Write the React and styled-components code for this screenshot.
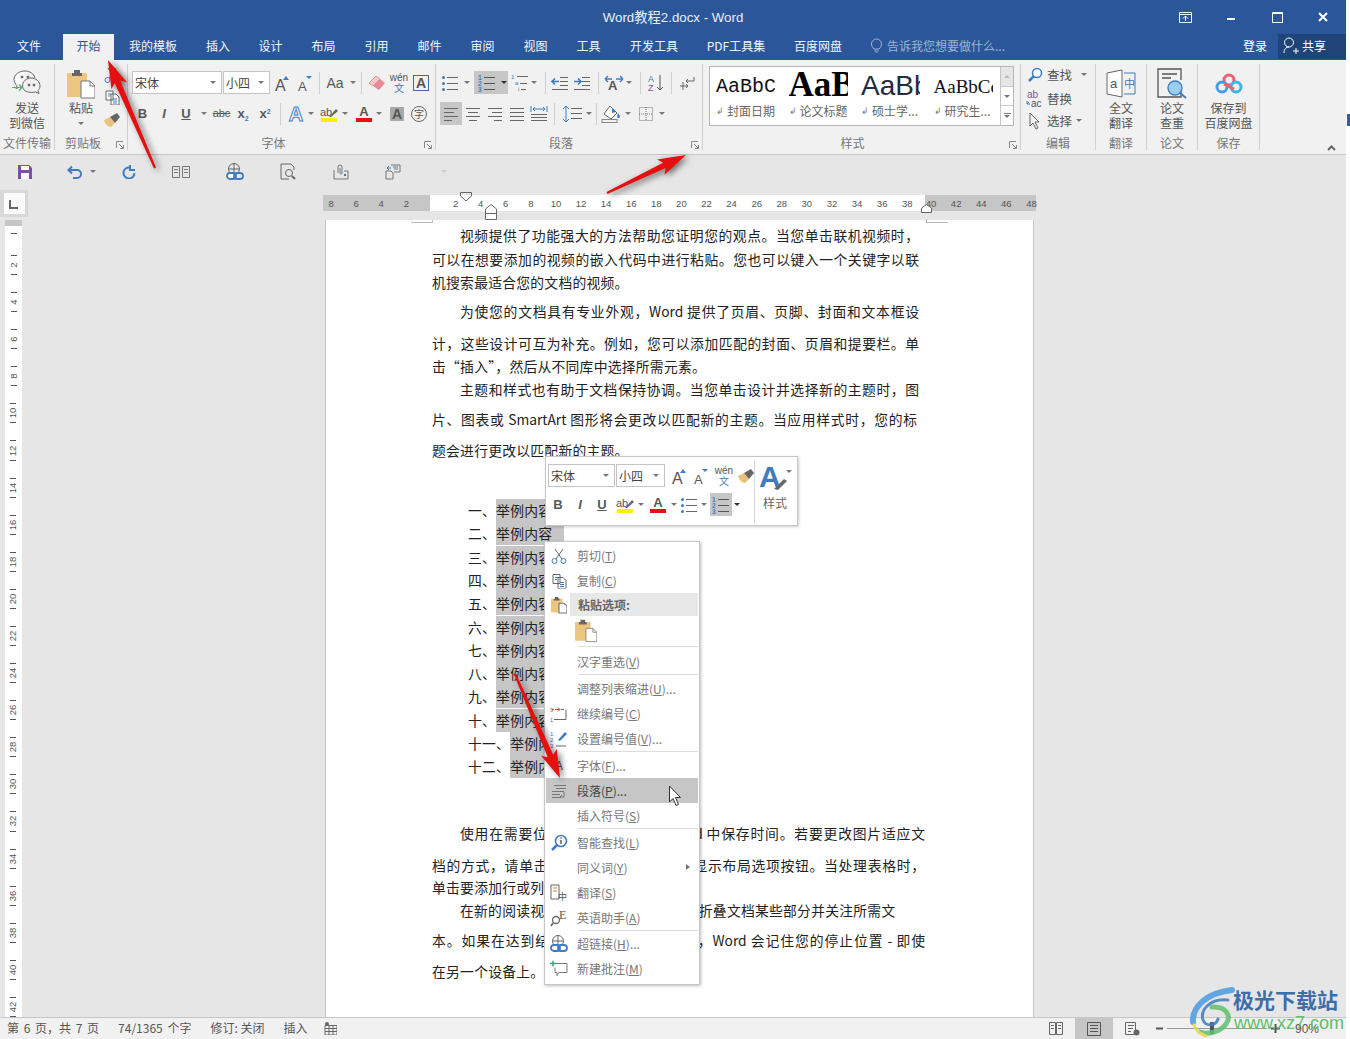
import React from 'react';
import styled, { createGlobalStyle } from 'styled-components';

const UI = `"Liberation Sans","Noto Sans CJK SC",sans-serif`;
const CN = `"Noto Sans CJK SC","Liberation Sans",sans-serif`;
const BLUE = '#3f7cbf';
const GREY = '#666';

const Global = createGlobalStyle`
  html,body{margin:0;padding:0;background:#fff;overflow:hidden;}
  *{box-sizing:border-box;}
  #root{width:1350px;height:1039px;overflow:hidden;}
`;
const Screen = styled.div`position:relative;width:1350px;height:1039px;overflow:hidden;background:#fff;font-family:${CN};`;
const Win = styled.div`width:1346px;height:1039px;display:flex;flex-direction:column;background:#e6e6e6;`;

/* title */
const TitleBar = styled.div`height:34px;flex:none;background:#2b579a;display:flex;align-items:center;position:relative;color:#fff;padding-bottom:2px;`;
const TitleText = styled.div`flex:1;text-align:center;font:13.3px ${UI};color:#e9eef6;`;
const WinBtns = styled.div`position:absolute;right:0;top:0;height:34px;display:flex;align-items:center;`;
const WinBtn = styled.span`width:46px;height:34px;display:flex;align-items:center;justify-content:center;`;
const TabBar = styled.div`height:26px;flex:none;background:#2b579a;display:flex;align-items:stretch;color:#fff;font-size:12px;`;
const Tab = styled.div`flex:none;width:${p=>p.$w}px;display:flex;align-items:center;justify-content:center;padding-bottom:3px;
  margin-left:${p=>p.$ml||0}px;
  background:${p=>p.$on?'#f1f1f1':'transparent'};color:${p=>p.$on?'#2b579a':'#f2f5fa'};`;
const Tell = styled.div`margin-left:14px;display:flex;align-items:center;gap:5px;color:#9fb4d4;flex:1;padding-bottom:3px;`;
const Login = styled.div`flex:none;display:flex;align-items:center;justify-content:center;width:42px;margin-right:2px;padding-bottom:3px;`;
const Share = styled.div`flex:none;width:68px;height:25px;background:#1f4478;display:flex;align-items:center;gap:2px;padding:0 0 2px 5px;`;

/* ribbon */
const Ribbon = styled.div`height:95px;flex:none;background:#f1f1f1;border-bottom:1px solid #c6c6c6;display:flex;align-items:flex-start;position:relative;`;
const Group = styled.div`position:relative;flex:none;width:${p=>p.$w}px;height:86px;margin-top:4px;border-right:1px solid #d0d0d0;display:flex;flex-direction:column;`;
const GroupBody = styled.div`flex:1;display:flex;flex-direction:${p=>p.$row?'row':'column'};padding:${p=>p.$pad||'7px 0 0 0'};min-height:0;`;
const GroupLabel = styled.div`flex:none;height:14px;line-height:13px;text-align:center;font-size:12px;color:#777;padding-right:${p=>p.$lr||0}px;`;
const Launcher = styled.span`position:absolute;right:3px;bottom:1px;width:8px;height:8px;display:flex;`;
const Big = styled.div`flex:${p=>p.$w?'none':1};width:${p=>p.$w?p.$w+'px':'auto'};display:flex;flex-direction:column;align-items:center;font-size:12px;line-height:15px;color:#555;text-align:center;white-space:nowrap;`;
const BigIcon = styled.div`flex:none;height:${p=>p.$h||32}px;display:flex;align-items:center;justify-content:center;`;
const SideTools = styled.div`flex:none;display:flex;flex-direction:column;align-items:center;gap:7px;margin-left:2px;width:22px;`;
const Row = styled.div`flex:none;display:flex;align-items:center;height:23px;padding-left:${p=>p.$pl||0}px;margin-bottom:${p=>p.$mb||0}px;`;
const Tool = styled.span`flex:none;display:inline-flex;align-items:center;justify-content:center;width:${p=>p.$w||22}px;height:23px;
  margin-left:${p=>p.$ml||0}px;background:${p=>p.$on?'#c6c6c6':'transparent'};`;
const Down = styled.i`flex:none;display:inline-block;width:0;height:0;border-left:3px solid transparent;border-right:3px solid transparent;border-top:3px solid ${p=>p.$c||'#777'};
  margin-left:${p=>p.$ml||0}px;`;
const Up = styled(Down)`transform:rotate(180deg);`;
const CaretSlot = styled.span`flex:none;display:inline-flex;align-items:center;justify-content:center;width:${p=>p.$w||8}px;height:${p=>p.$h||23}px;margin-left:${p=>p.$ml||0}px;background:${p=>p.$on?'#c6c6c6':'transparent'};`;
const VSep = styled.span`flex:none;width:1px;height:${p=>p.$h||22}px;background:#cfcfcf;margin:0 ${p=>p.$mr??4}px 0 ${p=>p.$m??4}px;`;
const Combo = styled.div`flex:none;width:${p=>p.$w}px;height:23px;background:#fff;border:1px solid #c4c4c4;margin-right:1px;display:flex;align-items:center;justify-content:space-between;padding:0 5px 0 2px;font-size:12px;color:#444;`;
const G = styled.span`font:${p=>p.$i?'italic ':''}${p=>p.$b?'bold ':''}${p=>p.$s||13}px ${p=>p.$cn?CN:UI};color:${p=>p.$c||'#595959'};
  text-decoration:${p=>p.$u?'underline':(p.$st?'line-through':'none')};line-height:1;white-space:nowrap;`;
const Script = styled.span`font-size:7px;color:${BLUE};position:relative;top:${p=>p.$top}px;`;
const OutlineA = styled.span`font:bold 20px ${UI};color:#fff;-webkit-text-stroke:1px ${BLUE};line-height:1;`;
const BoxA = styled.span`width:16px;height:16px;border:1px solid #3a6ea5;display:flex;align-items:center;justify-content:center;font:bold 14px ${UI};color:#555;`;
const ShadeA = styled.span`width:14px;height:14px;background:#a8a8a8;display:flex;align-items:center;justify-content:center;font:bold 14px ${UI};color:#555;`;
const CircleZ = styled.span`width:16px;height:16px;border:1px solid #666;border-radius:50%;display:flex;align-items:center;justify-content:center;font-size:10px;color:#555;`;
const Stack = styled.span`display:inline-flex;flex-direction:column;align-items:center;line-height:1;`;
const ColorBar = styled.span`width:16px;height:4px;background:${p=>p.$c};`;
const Gallery = styled.div`margin:2px 0 0 6px;width:305px;height:60px;display:flex;background:#fff;border:1px solid #b5b5b5;`;
const StyleCard = styled.div`flex:none;width:72.5px;height:58px;padding-left:6px;display:flex;flex-direction:column;overflow:hidden;`;
const StylePreview = styled.div`flex:none;height:36px;width:59px;overflow:hidden;display:flex;align-items:center;padding-top:${p=>p.$pt||0}px;white-space:nowrap;color:${p=>p.$c||'#111'};font:${p=>p.$b?'bold ':''}${p=>p.$s}px ${p=>p.$f};`;
const StyleName = styled.div`display:flex;align-items:center;gap:3px;font-size:12px;color:#666;line-height:16px;white-space:nowrap;`;
const Pil = styled.span`font-size:9px;color:#777;width:8px;`;
const GalleryScroll = styled.div`margin-left:auto;width:14px;display:flex;flex-direction:column;border-left:1px solid #c6c6c6;`;
const ScrollBtn = styled.div`flex:1;display:flex;align-items:center;justify-content:center;background:${p=>p.$off?'#e6e6e6':'#fff'};border-bottom:${p=>p.$last?'none':'1px solid #c6c6c6'};`;
const ScrollMore = styled.span`display:inline-flex;flex-direction:column;align-items:center;gap:1px;`;
const ScrollBar = styled.span`display:block;width:7px;height:1px;background:#777;`;
const EditRow = styled.div`flex:none;display:flex;align-items:center;height:23px;font-size:12.5px;color:#555;gap:3px;white-space:nowrap;margin-top:${p=>p.$mt||0}px;`;
const EditIcon = styled.span`flex:none;width:18px;display:flex;justify-content:center;`;
const Collapse = styled.span`position:absolute;right:10px;bottom:3px;display:flex;`;

/* qat */
const Qat = styled.div`height:35px;flex:none;display:flex;align-items:center;padding-bottom:2px;`;
const QatBtn = styled.span`flex:none;width:${p=>p.$w}px;display:flex;align-items:center;justify-content:center;gap:${p=>p.$gap||0}px;padding-left:${p=>p.$pl||0}px;`;

/* workspace */
const Work = styled.div`flex:1;display:flex;min-height:0;overflow:hidden;`;
const Rail = styled.div`width:28px;flex:none;display:flex;flex-direction:column;min-height:0;`;
const Corner = styled.div`flex:none;width:28px;height:27px;background:#d8d8d8;display:flex;align-items:center;justify-content:center;`;
const CornerIn = styled.div`width:21px;height:21px;background:#fbfbfb;display:flex;align-items:center;justify-content:center;`;
const VRuler = styled.div`margin:3px 0 0 5px;width:17px;flex:1;min-height:0;background:#fff;border-top:6px solid #c6c6c6;overflow:hidden;display:flex;flex-direction:column;align-items:center;`;
const Tick = styled.span`flex:none;display:block;width:6px;height:1px;background:#555;margin-top:${p=>p.$mt||0}px;margin-bottom:${p=>p.$mb||0}px;`;
const VSlot = styled.div`flex:none;height:37.1px;display:flex;flex-direction:column;align-items:center;justify-content:space-between;padding:9px 0 8px;`;
const VNum = styled.span`font:9.5px ${UI};color:#555;transform:rotate(-90deg);line-height:8px;height:8px;`;
const Canvas = styled.div`flex:1;min-width:0;padding:5px 0 0 295px;display:flex;flex-direction:column;`;
const HRuler = styled.div`position:relative;width:713px;height:16px;flex:none;display:flex;font:9.5px ${UI};color:#555;`;
const RulerSeg = styled.div`flex:none;height:16px;width:${p=>p.$w}px;background:${p=>p.$on?'#fff':'#c6c6c6'};display:flex;align-items:center;padding-left:${p=>p.$pl||0}px;`;
const RulerNum = styled.span`flex:none;width:25.1px;text-align:center;margin-left:${p=>p.$ml||0}px;`;
const Marker = styled.span`position:absolute;left:${p=>p.$x}px;top:${p=>p.$y}px;display:flex;`;
const Page = styled.div`position:relative;width:709px;margin:9px 0 0 2px;flex:1;background:#fff;border:1px solid #c6c6c6;border-width:0 1px;padding:4px 0 0 106px;overflow:hidden;font-size:13.8px;color:#222;`;
const Crop = styled.span`position:absolute;top:0;height:3px;width:22px;left:${p=>p.$x}px;border-bottom:1px solid #bbb;border-${p=>p.$side}:1px solid #bbb;`;
const Line = styled.div`height:23.3px;line-height:23.3px;margin-top:${p=>p.$gap}px;padding-left:${p=>p.$ind||0}px;
  ${p=>p.$fill
    ? `width:${p.$w}px;white-space:normal;text-align:justify;text-align-last:justify;`
    : `white-space:nowrap;letter-spacing:.25px;`}`;
const Sel = styled.span`display:inline-block;vertical-align:top;background:#c6c6c6;width:${p=>p.$w}px;height:23.4px;`;

/* status */
const Status = styled.div`height:22px;flex:none;background:#f1f1f1;border-top:1px solid #c6c6c6;display:flex;align-items:center;font-size:12px;color:#555;padding-left:7px;`;
const StatusItem = styled.span`margin-right:${p=>p.$mr||19}px;white-space:nowrap;padding-bottom:3px;word-spacing:${p=>p.$ws||0}px;`;
const StatusRight = styled.div`margin-left:auto;display:flex;align-items:center;height:21px;`;
const ViewBtn = styled.span`flex:none;width:${p=>p.$w}px;height:21px;display:flex;align-items:center;justify-content:center;background:${p=>p.$on?'#c6c6c6':'transparent'};`;
const Slider = styled.div`position:relative;flex:none;width:100px;height:1px;background:#999;`;
const Thumb = styled.span`position:absolute;left:43px;top:-6px;width:4px;height:12px;background:#555;`;
const Zoom = styled.span`flex:none;width:63px;padding-left:12px;font:12px ${UI};color:#555;`;

/* mini toolbar */
const Mini = styled.div`position:absolute;left:545px;top:456px;width:253px;height:70px;background:#fff;border:1px solid #c6c6c6;box-shadow:1px 1px 3px rgba(0,0,0,.2);display:flex;padding-top:7px;`;
const MiniLeft = styled.div`width:208px;display:flex;flex-direction:column;gap:6px;padding-left:2px;`;
const MiniStyle = styled.div`border-left:1px solid #d8d8d8;height:62px;flex:1;margin-top:-3px;display:flex;flex-direction:column;align-items:center;font-size:12px;color:#666;gap:1px;padding-right:2px;`;

/* context menu */
const Menu = styled.div`position:absolute;left:544px;top:541px;width:156px;height:444px;background:#fff;border:1px solid #c6c6c6;box-shadow:1px 1px 3px rgba(0,0,0,.25);padding:1px 1px;font-size:12px;color:#777;display:flex;flex-direction:column;`;
const Item = styled.div`position:relative;flex:none;height:${p=>p.$h||25}px;display:flex;align-items:center;padding-left:31px;background:${p=>p.$on?'#c6c6c6':'transparent'};color:${p=>p.$on?'#444':'#777'};`;
const ItemIcon = styled.span`position:absolute;left:2px;top:50%;transform:translateY(-50%);width:22px;display:flex;justify-content:center;`;
const Key = styled.u`text-underline-offset:1px;`;
const Sub = styled.i`position:absolute;right:8px;top:9px;border-left:4px solid #777;border-top:3.5px solid transparent;border-bottom:3.5px solid transparent;`;
const Head = styled.div`position:relative;flex:none;height:23px;display:flex;`;
const HeadLabel = styled.div`margin-left:24px;flex:1;background:#e8e8e8;padding-left:8px;display:flex;align-items:center;font-weight:700;color:#666;`;
const PasteRow = styled.div`flex:none;height:30px;padding-left:29px;display:flex;align-items:center;`;
const MSep = styled.div`flex:none;height:1px;background:#dcdcdc;margin:0 0 ${p=>p.$b||0}px 32px;`;

/* overlays */
const Overlay = styled.svg`position:absolute;left:0;top:0;pointer-events:none;`;
const EdgeMark = styled.span`position:absolute;left:1347px;top:114px;width:3px;height:12px;background:#3b5b9c;`;
const WaterName = styled.div`position:absolute;left:1233px;top:985px;font:bold 21px ${CN};color:#3d6ea8;line-height:28px;white-space:nowrap;`;
const WaterUrl = styled.div`position:absolute;left:1234px;top:1012px;font:18px ${UI};color:#5fc06f;line-height:22px;white-space:nowrap;`;

/* ---- icons ---- */
const S = ({w=20,h=20,d,c=GREY,sw=1,children}) => (
  <svg width={w} height={h} viewBox={`0 0 ${w} ${h}`} fill="none" stroke={c} strokeWidth={sw}>
    {d && <path d={d}/>}{children}
  </svg>
);
const AlignL = ()=><S w={16} h={14} d={`M1 1.5H15M1 5.5H11M1 9.5H15M1 13.5H9`}/>;
const AlignC = ()=><S w={16} h={14} d={`M1 1.5H15M3 5.5H13M1 9.5H15M4 13.5H12`}/>;
const AlignR = ()=><S w={16} h={14} d={`M1 1.5H15M5 5.5H15M1 9.5H15M7 13.5H15`}/>;
const AlignJ = ()=><S w={16} h={14} d={`M1 1.5H15M1 5.5H15M1 9.5H15M1 13.5H15`}/>;
const AlignD = ()=>(<S w={18} h={18} d="M1 9.5H17M1 12.5H17M1 15.5H17"><path d="M1 1V7M17 1V7M3 4H15M3 4l2-2M3 4l2 2M15 4l-2-2M15 4l-2 2" stroke="#3f7cbf"/></S>);
const Bullets = ()=>(<S w={18} h={16} d="M6 2.5H17M6 8.5H17M6 14.5H17"><circle cx="2.5" cy="2.5" r="1.5" fill={BLUE} stroke="none"/><circle cx="2.5" cy="8.5" r="1.5" fill={BLUE} stroke="none"/><circle cx="2.5" cy="14.5" r="1.5" fill={BLUE} stroke="none"/></S>);
const Num = ()=>(<svg width="18" height="18" viewBox="0 0 18 18"><path d="M6 3.5H17M6 9.5H17M6 15.5H17" stroke="#555"/><g fill={BLUE} fontFamily="Liberation Sans" fontSize="6.5" fontWeight="bold"><text x="0" y="6">1</text><text x="0" y="12">2</text><text x="0" y="18">3</text></g></svg>);
const Multi = ()=>(<svg width="18" height="18" viewBox="0 0 18 18"><path d="M6 2.5H17M9 9.5H16M10 15.5H15" stroke="#666"/><g fill={BLUE} fontFamily="Liberation Sans" fontSize="6"><text x="0" y="5">1</text><text x="4" y="11">a</text><text x="7" y="17">i</text></g></svg>);
const Outdent = ()=>(<S w={18} h={14} d="M9 1.5H17M9 5.5H17M9 9.5H17M1 13.5H17"><path d="M8 5.5H1M4 2.5l-3 3 3 3" stroke={BLUE} strokeWidth="1.6"/></S>);
const Indent = ()=>(<S w={18} h={14} d="M9 1.5H17M9 5.5H17M9 9.5H17M1 13.5H17"><path d="M1 5.5H8M5 2.5l3 3-3 3" stroke={BLUE} strokeWidth="1.6"/></S>);
const Han = ()=>(<svg width="20" height="16" viewBox="0 0 20 16"><text x="4" y="15" fontFamily="Liberation Sans" fontWeight="bold" fontSize="13" fill="#555">A</text><path d="M1 4l3-3M1 4l3 3M1 4H8M19 4l-3-3M19 4l-3 3M19 4H12" stroke={BLUE} strokeWidth="1.3" fill="none"/></svg>);
const Sort = ()=>(<svg width="16" height="18" viewBox="0 0 16 18"><text x="0" y="8" fontFamily="Liberation Sans" fontSize="9" fill={BLUE}>A</text><text x="0" y="17" fontFamily="Liberation Sans" fontSize="9" fill="#8a50a8">Z</text><path d="M12 1V16M9 13l3 3 3-3" stroke="#555" fill="none"/></svg>);
const ParaMark = ()=>(<S w={16} h={16} d="M15 2V6H7M9 4L7 6l2 2" c="#666"><path d="M1 11H9M7 9l2 2-2 2M4 7V15" stroke="#666"/></S>);
const LineSp = ()=>(<S w={22} h={18} d="M10 3.5H21M10 8.5H21M10 13.5H21"><path d="M5 1V17M2 4l3-3 3 3M2 14l3 3 3-3" stroke={BLUE}/></S>);
const Bucket = ()=>(<svg width="22" height="18" viewBox="0 0 22 18" fill="none"><path d="M9 1l7 7-6 6-7-5z" stroke="#666" fill="#fff"/><path d="M17 8c2 3 3 4 1 5s-2-2-1-5z" fill={BLUE}/><path d="M11 3l4 4-4 1z" fill={BLUE}/><rect x="1" y="14.5" width="15" height="3" stroke="#888"/></svg>);
const Borders = ()=>(<S w={14} h={14} c="#777"><rect x=".5" y=".5" width="13" height="13" strokeDasharray="1 1"/><path d="M7 0V14M0 7H14" strokeDasharray="1 1"/></S>);
const Launch = ()=><S w={8} h={8} c="#888" d="M.5 7V.5H7M3 3l4 4M4 7.5H7.5V4"/>;
const AUp = ({down})=>(<svg width="18" height="18" viewBox="0 0 18 18"><text x="1" y="17" fontFamily="Liberation Sans" fontSize={down?13:16} fill="#555">A</text><path d={down?"M9 2h6l-3 3z":"M9 6l3-4 3 4z"} fill={BLUE}/></svg>);
const Eraser = ()=>(<svg width="18" height="18" viewBox="0 0 18 18"><path d="M1 9l7-7 4 3-7 7z" fill="#f5c8d0" stroke="#d98"/><path d="M5 12l7-7 5 4-6 7z" fill="#e8899b"/></svg>);
const Wen = ()=>(<Stack><G $s={10} $c="#555">wén</G><G $s={10} $c={BLUE} $cn>文</G></Stack>);
const Brush = ()=>(<svg width="18" height="16" viewBox="0 0 18 16"><path d="M1 8l6-3 5 6-4 4C5 15 2 12 1 8z" fill="#e9c27e"/><path d="M7 5l5 6 5-6-3-4z" fill="#666"/></svg>);
const Hi = ()=>(<Stack><svg width="18" height="12" viewBox="0 0 18 12"><text x="0" y="10" fontFamily="Liberation Sans" fontSize="11" fill="#555">ab</text><path d="M9 11l7-8 2 2-7 6z" fill="#666"/></svg><ColorBar $c="#ffef00"/></Stack>);
const RedA = ()=>(<Stack><G $b $s={13} $c="#555">A</G><ColorBar $c="#e81010"/></Stack>);
const Wechat = ()=>(<svg width="30" height="28" viewBox="0 0 30 28" fill="none" stroke="#666"><path d="M13 1C6.500 1 2 5 2 9.500c0 2.500 1.500 4.500 3 6l-1 3 3.500-1.500" fill="#fff"/><path d="M13 1c5 0 9 3 10 7"/><path d="M19 8c5 0 9 3.500 9 8 0 2-1 3.500-2 4.500l1 3-3.500-1.500c-4 1-13 .5-13-6 0-4.500 4-8 8.500-8z"/><circle cx="10" cy="7" r="1" fill="#666"/><circle cx="16" cy="7" r="1" fill="#666"/><circle cx="17" cy="15" r="1" fill="#666"/><circle cx="22" cy="15" r="1" fill="#666"/><path d="M0 17.500H10M7 14.500l3 3-3 3" stroke="#59b06b" strokeWidth="1.200"/></svg>);
const Paste = ({s=1})=>(<svg width={28*s} height={30*s} viewBox="0 0 28 30"><rect x="0" y="4" width="20" height="24" rx="1" fill="#ecc57f"/><path d="M5 4h10v3H5z M7 1h6v3H7z" fill="#666"/><path d="M14 12h9l5 5v12H14z" fill="#fff" stroke="#777"/><path d="M23 12v5h5" fill="none" stroke="#777"/></svg>);
const PasteSm = ()=>(<svg width="16" height="18" viewBox="0 0 28 30"><rect x="0" y="4" width="20" height="24" rx="1" fill="#ecc57f"/><path d="M5 4h10v3H5z M7 1h6v3H7z" fill="#666"/><path d="M14 12h9l5 5v12H14z" fill="#fff" stroke="#777" strokeWidth="2"/></svg>);
const Copy = ()=>(<S w={15} h={15} c="#666"><path d="M1 1h7v9H1zM6 4h5l3 3v8H6z" fill="#fff"/><path d="M3 4h3M3 6h2M8 9h4M8 11h4M8 13h4" stroke={BLUE}/></S>);
const Cut = ()=>(<S w={16} h={16} c="#666"><path d="M4 1l7 10M12 1L5 11"/><circle cx="3.500" cy="13" r="2.500" stroke={BLUE}/><circle cx="12.500" cy="13" r="2.500" stroke={BLUE}/></S>);
const Mag = ({c=BLUE})=>(<S w={16} h={16}><circle cx="10" cy="6" r="4.500" stroke={c} strokeWidth="1.500" fill="#fff"/><path d="M7 9l-5 5" stroke={c} strokeWidth="2.500"/></S>);
const Cursor = ()=>(<S w={13} h={18} c="#666" d="M1 1V14l3-3 3 6 2-1-3-6h4z"/>);
const Replace = ()=>(<svg width="18" height="18" viewBox="0 0 18 18"><text x="1" y="8" fontFamily="Liberation Sans" fontSize="10" fill="#8a50a8">ab</text><text x="5" y="17" fontFamily="Liberation Sans" fontSize="10" fill="#555">ac</text><path d="M1 11v3h3M1 14l2-2" stroke={BLUE} fill="none"/></svg>);
const Translate = ()=>(<svg width="30" height="30" viewBox="0 0 30 30" fill="none"><path d="M1 4l15-3v27L1 25z" stroke="#666" fill="#fff"/><text x="4" y="19" fontFamily="Liberation Sans" fontSize="13" fill="#555">a</text><path d="M18 4H29V25H18" stroke={BLUE}/><text x="18" y="19" fontFamily="Noto Sans CJK SC" fontSize="11" fill={BLUE}>中</text></svg>);
const Thesis = ()=>(<svg width="30" height="32" viewBox="0 0 30 32" fill="none"><path d="M24 23v6H1V1h23v11" stroke="#555" strokeWidth="1.300"/><path d="M5 6H20M5 10H14" stroke="#555" strokeWidth="1.500"/><circle cx="18" cy="20" r="7" fill="#9bcdf2" stroke="#3f7cbf" strokeWidth="1.300"/><path d="M23 25l6 5" stroke="#3f7cbf" strokeWidth="2"/></svg>);
const Cloud = ()=>(<svg width="28" height="22" viewBox="0 0 28 22" fill="none"><circle cx="14" cy="7" r="5" stroke="#ef5f72" strokeWidth="3"/><circle cx="7" cy="14" r="5" stroke="#3f9fe8" strokeWidth="3"/><circle cx="21" cy="14" r="5" stroke="#38b8e8" strokeWidth="3"/><path d="M9 11l10 5" stroke="#ef5f72" strokeWidth="3"/></svg>);
const Save = ()=>(<svg width="14" height="14" viewBox="0 0 14 14"><path d="M0 0h11l3 3v11H0z" fill="#7d4ea5"/><rect x="3" y="1" width="8" height="4" fill="#fff"/><rect x="3" y="8" width="8" height="6" fill="#fff"/></svg>);
const Undo = ()=>(<S w={16} h={14} c="#3f7cbf" sw={2} d="M2 5h8a4 4 0 0 1 0 8H6M5 1.500L1.500 5 5 8.500"/>);
const Redo = ()=>(<S w={14} h={14} c="#3f7cbf" sw={2} d="M8 2.500A5.500 5.500 0 1 0 12.500 8M8 0v5h5"/>);
const Book = ()=>(<S w={18} h={12} c="#777" d="M.5.500h7v11h-7zM10.500.500h7v11h-7zM2 3.500h4M2 6.500h4M12 3.500h4M12 6.500h4"/>);
const Link = ()=>(<svg width="18" height="18" viewBox="0 0 18 18" fill="none"><circle cx="8" cy="6" r="5.500" stroke="#666"/><path d="M3 6h10M8 1v10" stroke="#666"/><rect x="1" y="10" width="9" height="6" rx="3" stroke={BLUE} strokeWidth="1.800" fill="#fff"/><rect x="8" y="10" width="9" height="6" rx="3" stroke={BLUE} strokeWidth="1.800"/></svg>);
const DocSearch = ()=>(<S w={16} h={17} c="#666" d="M11 1H1v15h8M11 1l3 3v3"><circle cx="9" cy="10" r="3.500"/><path d="M12 13l3 3" strokeWidth="2"/></S>);
const Clip = ()=>(<S w={16} h={16} c="#777" d="M1 6V15H15V7H11"><path d="M5 9V3a2 2 0 0 1 4 0v6a1 1 0 0 1-2 0V4" /><rect x="11" y="10" width="2" height="2" fill={BLUE} stroke="none"/></S>);
const DocCmt = ()=>(<S w={16} h={16} c="#777" d="M1 7h5l2 2v6H1zM6 1h9v7H9M8 3h5M9 5h4"><path d="M6 4H2M4 2L2 4l2 2" stroke={BLUE}/></S>);
const Cont = ()=>(<svg width="18" height="17" viewBox="0 0 18 17" fill="none"><path d="M4 14H16V4M2 4h2M11 4h3" stroke="#666"/><path d="M5 4h5M8 2l2 2-2 2" stroke="#c85a30"/><text x="0" y="6" fontSize="6" fill="#c85a30" fontFamily="Liberation Sans">9</text><text x="0" y="16" fontSize="6" fill="#c85a30" fontFamily="Liberation Sans">1</text></svg>);
const SetNum = ()=>(<svg width="18" height="18" viewBox="0 0 18 18" fill="none"><path d="M6 16H16" stroke="#666"/><path d="M8 10l7-8 2 2-7 7z" fill={BLUE}/><g fill={BLUE} fontFamily="Liberation Sans" fontSize="6"><text x="0" y="6">1</text><text x="0" y="12">2</text><text x="0" y="18">3</text></g></svg>);
const ParaI = ()=>(<S w={16} h={14} c="#777" d="M3 1.500H15M5 4.500H15M1 7.500H13M1 10.500H9M1 13.500H9M13 8v5H9M11 11l-2 2 2 2"/>);
const SmartFind = ()=>(<svg width="18" height="18" viewBox="0 0 18 18" fill="none"><circle cx="11" cy="7" r="5.500" stroke={BLUE} strokeWidth="1.600"/><path d="M7 11l-5 5" stroke={BLUE} strokeWidth="2.500"/><path d="M11 6v4M11 3.500v1.200" stroke="#555" strokeWidth="1.400"/></svg>);
const TransI = ()=>(<svg width="18" height="18" viewBox="0 0 18 18" fill="none"><path d="M1 1h8v14H1z" stroke="#666"/><path d="M3 4h4M3 7h4" stroke="#d9782f"/><text x="8" y="16" fontFamily="Noto Sans CJK SC" fontSize="9" fill="#555">中</text></svg>);
const EngI = ()=>(<svg width="18" height="18" viewBox="0 0 18 18" fill="none"><circle cx="6" cy="11" r="3.500" stroke="#666" strokeWidth="1.300"/><path d="M3 14l-2 3" stroke="#666" strokeWidth="1.600"/><text x="9" y="10" fontFamily="Liberation Serif" fontSize="12" fill="#555">E</text></svg>);
const Note = ()=>(<S w={18} h={17} c="#777" d="M6 3h11v9H9l-2 3v-3H5V7"><path d="M3 0v6M0 3h6" stroke="#3aa37a" strokeWidth="1.500"/></S>);
const Calc = ()=>(<S w={13} h={13} c="#666" d="M1 3.500H13V13H1zM1 6.500H13M1 9.500H13M5 4V13M9 4V13"><circle cx="3" cy="2" r="2" fill="#666" stroke="none"/></S>);
const PrintV = ()=>(<S w={14} h={14} c="#555" d="M.5.500h13v13H.500zM3 3.500h8M3 6.500h8M3 9.500h8"/>);
const WebV = ()=>(<S w={15} h={14} c="#666" d="M.5.500h10v12H.500zM3 3.500h6M3 6.500h5M3 9.500h3"><circle cx="11.500" cy="10.500" r="3" fill="#666" stroke="none"/></S>);
const ReadV = ()=>(<S w={14} h={13} c="#666" d="M.5.500h6v12H.500zM7.500.500h6v12h-6zM2 3.500h3M2 6.500h3M9 3.500h3M9 6.500h3"/>);
const Bulb = ()=>(<S w={11} h={15} c="#9fb4d4" d="M3 11C1 9 .5 7.500.5 6a5 5 0 0 1 10 0c0 1.500-.5 3-2.500 5zM3.500 13h4M4.500 15h2"/>);
const User = ()=>(<S w={17} h={17} c="#fff" d="M1 16c0-4 2-6 5-6M6 1a4 4 0 1 1 0 9 4 4 0 0 1 0-9zM13 11v6M10 14h6"/>);
const RibbonD = ()=>(<S w={13} h={11} c="#fff" d="M.5.500h12v10H.500zM1 2.500H12M6.500 9V4.500M4 6.500l2.500-2.500L9 6.500"/>);
const Min = ()=><S w={10} h={10} c="#fff" sw={2} d="M1 7H9"/>;
const Max = ()=><S w={11} h={11} c="#fff" d="M.5.500h10v10H.500zM0 1.500H11" sw={1}/>;
const Close = ()=><S w={10} h={10} c="#fff" sw={2} d="M1 1l8 8M9 1L1 9"/>;
const LMark = ()=><S w={10} h={10} c="#666" sw={2} d="M1 1V9H9"/>;

const RedArrow = ({x0,y0,x1,y1}) => {
  const dx=x1-x0, dy=y1-y0, L=Math.hypot(dx,dy), ux=dx/L, uy=dy/L, nx=-uy, ny=ux;
  const pt=(a,b)=>`${(x0+ux*a+nx*b).toFixed(1)},${(y0+uy*a+ny*b).toFixed(1)}`;
  const pts=[pt(0,-1.1),pt(L-24,-3),pt(L-28,-8.5),pt(L,0),pt(L-28,8.5),pt(L-24,3),pt(0,1.1)].join(' ');
  return <polygon points={pts} fill="#e60f0f"/>;
};

const Caret = ({w,ml,on,c})=><CaretSlot $w={w} $ml={ml} $on={on}><Down $c={c}/></CaretSlot>;

const tabs=[['文件',58],['开始',51,true,5],['我的模板',78],['插入',52],['设计',53],['布局',53],['引用',53],['邮件',53],['审阅',53],['视图',53],['工具',53],['开发工具',78],['PDF工具集',86],['百度网盘',78]];

const styleCards=[
 {t:'AaBbCc',s:20,pt:3,f:`"Liberation Mono",monospace`,n:'封面日期'},
 {t:'AaBbC',s:35,pt:0,f:`"Liberation Serif",serif`,b:true,n:'论文标题',c:'#000'},
 {t:'AaBbC',s:28,pt:2,f:`"Liberation Sans",sans-serif`,n:'硕士学...',c:'#1f2d3d'},
 {t:'AaBbCc',s:19,pt:3,f:`"Liberation Serif",serif`,n:'研究生...'},
];

const para=[
 {y:236,t:'视频提供了功能强大的方法帮助您证明您的观点。当您单击联机视频时，',i:28,w:487,f:1},
 {y:260,t:'可以在想要添加的视频的嵌入代码中进行粘贴。您也可以键入一个关键字以联',w:487,f:1},
 {y:283,t:'机搜索最适合您的文档的视频。'},
 {y:312,t:'为使您的文档具有专业外观，Word 提供了页眉、页脚、封面和文本框设',i:28,w:487,f:1},
 {y:344,t:'计，这些设计可互为补充。例如，您可以添加匹配的封面、页眉和提要栏。单',w:487,f:1},
 {y:367,t:'击“插入”，然后从不同库中选择所需元素。'},
 {y:390,t:'主题和样式也有助于文档保持协调。当您单击设计并选择新的主题时，图',i:28,w:487,f:1},
 {y:420,t:'片、图表或 SmartArt 图形将会更改以匹配新的主题。当应用样式时，您的标',w:485,f:1},
 {y:451,t:'题会进行更改以匹配新的主题。'},
 {y:511,n:'一、'},{y:534,n:'二、',short:1},{y:558,n:'三、'},{y:581,n:'四、'},{y:604,n:'五、'},{y:628,n:'六、'},
 {y:651,n:'七、'},{y:674,n:'八、'},{y:697,n:'九、'},{y:721,n:'十、'},{y:744,n:'十一、'},{y:767,n:'十二、'},
 {y:834,t:'使用在需要位置出现的新按钮在 Word 中保存时间。若要更改图片适应文',i:28,w:493,f:1},
 {y:866,t:'档的方式，请单击该图片，图片旁边将会显示布局选项按钮。当处理表格时，',w:493,f:1},
 {y:888,t:'单击要添加行或列的位置，然后单击加号。'},
 {y:911,t:'在新的阅读视图中阅读更加容易。可以折叠文档某些部分并关注所需文',i:28},
 {y:941,t:'本。如果在达到结尾处之前需要停止读取，Word 会记住您的停止位置 - 即使',w:493,f:1},
 {y:972,t:'在另一个设备上。'},
];

const Mi=({icon,children,k,tail,on,sub})=>(
  <Item $on={on}>{icon&&<ItemIcon>{icon}</ItemIcon>}{children}(<Key>{k}</Key>){tail}{sub&&<Sub/>}</Item>
);

export default function App(){
  return (
  <Screen>
    <Global/>
    <Win>
      <TitleBar>
        <TitleText>Word教程2.docx - Word</TitleText>
        <WinBtns>
          <WinBtn><RibbonD/></WinBtn><WinBtn><Min/></WinBtn><WinBtn><Max/></WinBtn><WinBtn><Close/></WinBtn>
        </WinBtns>
      </TitleBar>
      <TabBar>
        {tabs.map(([t,w,on,ml])=><Tab key={t} $w={w} $on={on} $ml={ml}>{t}</Tab>)}
        <Tell><Bulb/>告诉我您想要做什么...</Tell>
        <Login>登录</Login>
        <Share><User/>共享</Share>
      </TabBar>

      <Ribbon>
        <Group $w={55}>
          <GroupBody $pad="3px 0 0 0"><Big><BigIcon $h={33}><Wechat/></BigIcon>发送<br/>到微信</Big></GroupBody>
          <GroupLabel>文件传输</GroupLabel>
        </Group>
        <Group $w={73}>
          <GroupBody $row $pad="3px 0 0 8px">
            <Big $w={36}><BigIcon $h={33}><Paste/></BigIcon>粘贴<CaretSlot $w={8} $h={16}><Down/></CaretSlot></Big>
            <SideTools><Cut/><Copy/><Brush/></SideTools>
          </GroupBody>
          <GroupLabel $lr={16}>剪贴板</GroupLabel>
          <Launcher><Launch/></Launcher>
        </Group>
        <Group $w={308}>
          <GroupBody>
            <Row $pl={4} $mb={8}>
              <Combo $w={90}>宋体<Down/></Combo>
              <Combo $w={47}>小四<Down/></Combo>
              <Tool $w={23}><AUp/></Tool><Tool $w={23}><AUp down/></Tool>
              <VSep $m={2} $mr={0}/>
              <Tool $w={30}><G $s={14}>Aa</G></Tool><Caret w={6}/>
              <VSep $m={5} $mr={4}/>
              <Tool><Eraser/></Tool><Tool><Wen/></Tool><Tool><BoxA>A</BoxA></Tool>
            </Row>
            <Row $pl={4}>
              <Tool $w={21}><G $b>B</G></Tool><Tool><G $b $i>I</G></Tool><Tool><G $b $u>U</G></Tool><Caret w={14}/>
              <Tool $w={21}><G $st $s={11}>abc</G></Tool>
              <Tool><G $b>x<Script $top={3}>2</Script></G></Tool>
              <Tool><G $b>x<Script $top={-4}>2</Script></G></Tool>
              <VSep/>
              <Tool><OutlineA>A</OutlineA></Tool><Caret/>
              <Tool $ml={3}><Hi/></Tool><Caret w={10}/>
              <Tool $ml={3}><RedA/></Tool><Caret/>
              <Tool $ml={3}><ShadeA>A</ShadeA></Tool><Tool><CircleZ>字</CircleZ></Tool>
            </Row>
          </GroupBody>
          <GroupLabel $lr={16}>字体</GroupLabel>
          <Launcher><Launch/></Launcher>
        </Group>
        <Group $w={267}>
          <GroupBody>
            <Row $pl={3} $mb={8}>
              <Tool><Bullets/></Tool><Caret w={12}/>
              <Tool $w={26} $ml={1} $on><Num/></Tool><Caret w={8} on c="#333"/>
              <Tool $w={20} $ml={2}><Multi/></Tool><Caret/>
              <VSep $m={7} $mr={3}/>
              <Tool><Outdent/></Tool><Tool><Indent/></Tool>
              <VSep $m={5} $mr={4}/>
              <Tool><Han/></Tool><Caret/>
              <VSep $m={7} $mr={4}/>
              <Tool><Sort/></Tool>
              <VSep $m={4} $mr={4}/>
              <Tool><ParaMark/></Tool>
            </Row>
            <Row $pl={4}>
              <Tool $on><AlignL/></Tool><Tool><AlignC/></Tool><Tool><AlignR/></Tool><Tool><AlignJ/></Tool><Tool><AlignD/></Tool>
              <VSep $m={4} $mr={4}/>
              <Tool $w={26}><LineSp/></Tool><Caret/>
              <VSep $m={3} $mr={3}/>
              <Tool $w={24}><Bucket/></Tool><Caret/>
              <Tool $ml={3}><Borders/></Tool><Caret w={10}/>
            </Row>
          </GroupBody>
          <GroupLabel $lr={16}>段落</GroupLabel>
          <Launcher><Launch/></Launcher>
        </Group>
        <Group $w={318}>
          <GroupBody $pad="0">
            <Gallery>
              {styleCards.map(c=>(
                <StyleCard key={c.n}>
                  <StylePreview $s={c.s} $f={c.f} $b={c.b} $c={c.c} $pt={c.pt}>{c.t}</StylePreview>
                  <StyleName><Pil>↲</Pil>{c.n}</StyleName>
                </StyleCard>
              ))}
              <GalleryScroll>
                <ScrollBtn $off><Up $c="#bbb"/></ScrollBtn>
                <ScrollBtn><Down/></ScrollBtn>
                <ScrollBtn $last><ScrollMore><ScrollBar/><Down/></ScrollMore></ScrollBtn>
              </GalleryScroll>
            </Gallery>
          </GroupBody>
          <GroupLabel $lr={18}>样式</GroupLabel>
          <Launcher><Launch/></Launcher>
        </Group>
        <Group $w={75}>
          <GroupBody $pad="0 0 0 5px">
            <EditRow $mt={-1}><EditIcon><Mag/></EditIcon>查找<CaretSlot $w={14} $ml={2}><Down/></CaretSlot></EditRow>
            <EditRow $mt={1}><EditIcon><Replace/></EditIcon>替换</EditRow>
            <EditRow $mt={-1}><EditIcon><Cursor/></EditIcon>选择<Down $ml={1}/></EditRow>
          </GroupBody>
          <GroupLabel>编辑</GroupLabel>
        </Group>
        <Group $w={51}>
          <GroupBody $pad="3px 0 0 0"><Big><BigIcon $h={33}><Translate/></BigIcon>全文<br/>翻译</Big></GroupBody>
          <GroupLabel>翻译</GroupLabel>
        </Group>
        <Group $w={51}>
          <GroupBody $pad="3px 0 0 0"><Big><BigIcon $h={33}><Thesis/></BigIcon>论文<br/>查重</Big></GroupBody>
          <GroupLabel>论文</GroupLabel>
        </Group>
        <Group $w={62}>
          <GroupBody $pad="3px 0 0 0"><Big><BigIcon $h={33}><Cloud/></BigIcon>保存到<br/>百度网盘</Big></GroupBody>
          <GroupLabel>保存</GroupLabel>
        </Group>
        <Collapse><S w={9} h={6} c="#666" sw={2} d="M1 5l3.500-3.500L8 5"/></Collapse>
      </Ribbon>

      <Qat>
        <QatBtn $w={50}><Save/></QatBtn>
        <QatBtn $w={54} $gap={7} $pl={9}><Undo/><Down/></QatBtn>
        <QatBtn $w={50}><Redo/></QatBtn>
        <QatBtn $w={54}><Book/></QatBtn>
        <QatBtn $w={53}><Link/></QatBtn>
        <QatBtn $w={54}><DocSearch/></QatBtn>
        <QatBtn $w={51}><Clip/></QatBtn>
        <QatBtn $w={53}><DocCmt/></QatBtn>
        <QatBtn $w={50}><Down $c="#ccc"/></QatBtn>
      </Qat>

      <Work>
        <Rail>
          <Corner><CornerIn><LMark/></CornerIn></Corner>
          <VRuler>
            <Tick $mt={7} $mb={12}/>
            {Array.from({length:21},(_,i)=>(
              <VSlot key={i}><Tick/><VNum>{(i+1)*2}</VNum><Tick/></VSlot>
            ))}
          </VRuler>
        </Rail>
        <Canvas>
          <HRuler>
            <RulerSeg $w={107}>
              {[8,6,4,2].map((n,i)=><RulerNum key={n} $ml={i?0:-4.5}>{n}</RulerNum>)}
            </RulerSeg>
            <RulerSeg $w={495} $on $pl={13}>
              {Array.from({length:19},(_,i)=><RulerNum key={i}>{(i+1)*2}</RulerNum>)}
            </RulerSeg>
            <RulerSeg $w={111}>
              {[40,42,44,46,48].map((n,i)=><RulerNum key={n} $ml={i?0:-6.5}>{n}</RulerNum>)}
            </RulerSeg>
            <Marker $x={137} $y={-3}><S w={12} h={10} c="#666" d="M.5.500H11.500V4L6 9 .500 4z"/></Marker>
            <Marker $x={162} $y={9}><svg width="12" height="16" viewBox="0 0 12 16" fill="#fff" stroke="#666"><path d="M.5 15.500V5L6 .5 11.500 5V15.500zM.5 9.500H11.500"/></svg></Marker>
            <Marker $x={598} $y={9}><svg width="11" height="9" viewBox="0 0 11 9" fill="#fff" stroke="#666"><path d="M.5 8.500V4L5.500.5 10.500 4V8.500z"/></svg></Marker>
          </HRuler>
          <Page>
            <Crop $x={85} $side="right"/>
            <Crop $x={600} $side="left"/>
            {para.map((l,idx)=>{
              const gap=idx===0?0:+(l.y-para[idx-1].y-23.3).toFixed(1);
              if(l.n){
                const isLong=l.n.length>2;
                return (
                  <Line key={idx} $gap={gap} $ind={36}>
                    {l.n}<Sel $w={l.short?68:(isLong?60:70)}>举例内容</Sel>
                  </Line>
                );
              }
              return <Line key={idx} $gap={gap} $ind={l.i} $w={l.w} $fill={l.f}>{l.t}</Line>;
            })}
          </Page>
        </Canvas>
      </Work>

      <Status>
        <StatusItem $ws={2}>第 6 页，共 7 页</StatusItem>
        <StatusItem $ws={2}>74/1365 个字</StatusItem>
        <StatusItem>修订: 关闭</StatusItem>
        <StatusItem $mr={17}>插入</StatusItem>
        <Calc/>
        <StatusRight>
          <ViewBtn $w={38}><ReadV/></ViewBtn>
          <ViewBtn $w={38} $on><PrintV/></ViewBtn>
          <ViewBtn $w={38}><WebV/></ViewBtn>
          <ViewBtn $w={16}><S w={7} h={3} c="#555" sw={2} d="M0 1.500H7"/></ViewBtn>
          <Slider><Thumb/></Slider>
          <ViewBtn $w={16}><S w={9} h={9} c="#555" sw={2} d="M0 4.500H9M4.500 0V9"/></ViewBtn>
          <Zoom>90%</Zoom>
        </StatusRight>
      </Status>
    </Win>

    <Mini>
      <MiniLeft>
        <Row>
          <Combo $w={67}>宋体<Down/></Combo>
          <Combo $w={49}>小四<Down/></Combo>
          <Tool $w={22} $ml={3}><AUp/></Tool><Tool><AUp down/></Tool><Tool><Wen/></Tool><Tool><Brush/></Tool>
        </Row>
        <Row>
          <Tool $ml={-1}><G $b>B</G></Tool><Tool><G $b $i>I</G></Tool><Tool><G $b $u>U</G></Tool>
          <Tool $w={22} $ml={1}><Hi/></Tool><Caret w={10}/>
          <Tool $w={22} $ml={1}><RedA/></Tool><Caret w={10}/>
          <Tool $w={20}><Bullets/></Tool><Caret w={10}/>
          <Tool $ml={1} $on><Num/></Tool><Caret w={10} c="#333"/>
        </Row>
      </MiniLeft>
      <MiniStyle>
        <svg width="34" height="32" viewBox="0 0 34 32"><text x="1" y="26" fontFamily="Liberation Sans" fontWeight="bold" fontSize="30" fill={BLUE}>A</text><path d="M16 28l10-10 3 2-9 9z" fill="#666"/><path d="M28 9h6l-3 3z" fill="#777"/></svg>
        样式
      </MiniStyle>
    </Mini>

    <Menu>
      <Mi icon={<Cut/>} k="T">剪切</Mi>
      <Mi icon={<Copy/>} k="C">复制</Mi>
      <Head><ItemIcon><PasteSm/></ItemIcon><HeadLabel>粘贴选项:</HeadLabel></Head>
      <PasteRow><Paste s={0.78}/></PasteRow>
      <MSep $b={2}/>
      <Mi k="V">汉字重选</Mi>
      <MSep $b={1}/>
      <Mi k="U" tail="...">调整列表缩进</Mi>
      <Mi icon={<Cont/>} k="C">继续编号</Mi>
      <Mi icon={<SetNum/>} k="V" tail="...">设置编号值</Mi>
      <MSep $b={1}/>
      <Mi icon={<G $s={12}>A</G>} k="F" tail="...">字体</Mi>
      <Mi icon={<ParaI/>} k="P" tail="..." on>段落</Mi>
      <Mi k="S">插入符号</Mi>
      <MSep $b={1}/>
      <Mi icon={<SmartFind/>} k="L">智能查找</Mi>
      <Mi k="Y" sub>同义词</Mi>
      <Mi icon={<TransI/>} k="S">翻译</Mi>
      <Mi icon={<EngI/>} k="A">英语助手</Mi>
      <MSep/>
      <Mi icon={<Link/>} k="H" tail="...">超链接</Mi>
      <Mi icon={<Note/>} k="M">新建批注</Mi>
    </Menu>

    <Overlay width="1350" height="1039" viewBox="0 0 1350 1039">
      <g style={{filter:'drop-shadow(3px 2px 3px rgba(0,0,0,.55))'}}>
        <RedArrow x0={155} y0={168} x1={108} y1={60}/>
        <RedArrow x0={607} y0={193} x1={686} y1={155}/>
        <RedArrow x0={515} y0={674} x1={560} y1={778}/>
      </g>
      <path d="M669.500 786V802l3.500-3.500 3 7 2.500-1-3-7h5z" fill="#fff" stroke="#333"/>
      <g fill="none" strokeLinecap="round" opacity=".85">
        <path d="M1232 990C1205 993 1192 1008 1193 1022" stroke="#4a9be0" strokeWidth="6"/>
        <path d="M1228 1000C1210 998 1200 1010 1203 1020C1206 1027 1216 1026 1218 1019" stroke="#3f7cbf" strokeWidth="3"/>
        <path d="M1212 1007C1226 1006 1232 1016 1226 1024C1220 1032 1208 1035 1200 1032" stroke="#5fc06f" strokeWidth="5"/>
        <path d="M1194 1025C1196 1031 1200 1034 1206 1036" stroke="#e6d94a" strokeWidth="3"/>
      </g>
    </Overlay>
    <WaterName>极光下载站</WaterName>
    <WaterUrl>www.xz7.com</WaterUrl>
    <EdgeMark/>
  </Screen>
  );
}
